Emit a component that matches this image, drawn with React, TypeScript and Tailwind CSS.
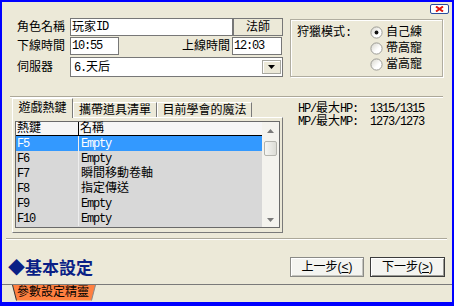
import React from "react";

const ASCII = /^[\x20-\x7e]+$/;
function Mx({ t }: { t: string }) {
  const parts = t.split(/([\x20-\x7e]+)/).filter((s) => s.length);
  return (
    <>
      {parts.map((p, i) =>
        ASCII.test(p) ? (
          <span key={i} className="[font-family:'Liberation_Mono',monospace] tracking-[-1.2px] whitespace-pre">
            {p}
          </span>
        ) : (
          <span key={i}>{p}</span>
        )
      )}
    </>
  );
}

function Radio({ checked, id }: { checked?: boolean; id: string }) {
  return (
    <svg width="13" height="13" viewBox="0 0 13 13" className="shrink-0">
      <defs>
        <linearGradient id={id} x1="0" y1="0" x2="1" y2="1">
          <stop offset="0" stopColor="#d4d2c8" />
          <stop offset="0.6" stopColor="#ffffff" />
          <stop offset="1" stopColor="#ffffff" />
        </linearGradient>
      </defs>
      <circle cx="6.5" cy="6.5" r="5.6" fill={`url(#${id})`} stroke="#9c9c96" strokeWidth="1" />
      {checked && <circle cx="6.5" cy="6.5" r="1.9" fill="#111" />}
    </svg>
  );
}

function Tri({ up }: { up?: boolean }) {
  return (
    <svg width="7" height="4" viewBox="0 0 7 4">
      <path d={up ? "M0 4 L3.5 0 L7 4Z" : "M0 0 L7 0 L3.5 4Z"} fill="#7a7a7a" />
    </svg>
  );
}

const rows: [string, string, boolean?][] = [
  ["F5", "Empty", true],
  ["F6", "Empty"],
  ["F7", "瞬間移動卷軸"],
  ["F8", "指定傳送"],
  ["F9", "Empty"],
  ["F10", "Empty"],
];

export default function App() {
  return (
    <div className="w-[454px] h-[306px] bg-[#ece9d8] border-solid border-[#0000ff] border-t-2 border-l-2 border-r-2 border-b-4 flex flex-col text-[12px] leading-[14px] text-black [font-family:'Liberation_Sans','Noto_Sans_CJK_TC',sans-serif] overflow-hidden">
      {/* header with close button */}
      <div className="h-[16px] flex justify-end items-start pr-[3px]">
        <div className="mt-[2px] w-[19px] h-[10px] rounded-[2px] border border-[#2a4c9c] bg-white flex items-center justify-center">
          <svg width="9" height="6" viewBox="0 0 9 6">
            <path d="M1 0.5 L8 5.5 M8 0.5 L1 5.5" stroke="#e0140c" strokeWidth="2" />
          </svg>
        </div>
      </div>

      {/* top section */}
      <div className="h-[60px] flex">
        <div className="ml-[15px] w-[266px] flex flex-col">
          <div className="h-[18px] flex items-center">
            <div className="w-[53px]"><Mx t="角色名稱" /></div>
            <div className="w-[163px] h-[18px] bg-white border border-[#777] flex items-center pl-[1px]">
              <Mx t="玩家ID" />
            </div>
            <div className="w-[50px] h-[18px] border border-[#777] flex items-center justify-center">
              <Mx t="法師" />
            </div>
          </div>
          <div className="mt-[1px] h-[18px] flex items-center">
            <div className="w-[53px]"><Mx t="下線時間" /></div>
            <div className="w-[49px] h-[18px] bg-white border border-[#777] flex items-center pl-[1px]">
              <Mx t="10:55" />
            </div>
            <div className="flex-1 text-right pr-[2px]"><Mx t="上線時間" /></div>
            <div className="w-[50px] h-[18px] mr-[1px] bg-white border border-[#777] flex items-center pl-[1px]">
              <Mx t="12:03" />
            </div>
          </div>
          <div className="mt-[2px] h-[20px] flex items-center">
            <div className="w-[53px]"><Mx t="伺服器" /></div>
            <div className="w-[213px] h-[20px] bg-white border border-[#777] flex items-center justify-between pl-[3px] pr-[1px]">
              <span><Mx t="6.天后" /></span>
              <div className="w-[19px] h-[14px] bg-[#ece9d8] border border-[#a8a8a0] shadow-[inset_1px_1px_0_#fff] flex items-center justify-center">
                <svg width="7" height="4" viewBox="0 0 7 4">
                  <path d="M0 0 L7 0 L3.5 4Z" fill="#000" />
                </svg>
              </div>
            </div>
          </div>
        </div>
        <div className="ml-[7px] mt-[1px] w-[153px] h-[58px] border border-[#b0ada0] shadow-[inset_1px_1px_0_#fff,1px_1px_0_#fff] flex pl-[6px] pt-[4px]">
          <div className="w-[73px] leading-[16px]"><Mx t="狩獵模式:" /></div>
          <div className="flex flex-col">
            {[
              ["自己練", true],
              ["帶高寵", false],
              ["當高寵", false],
            ].map(([l, c], i) => (
              <div key={i} className="h-[16px] flex items-center">
                <Radio id={`rg${i}`} checked={c as boolean} />
                <span className="ml-[3px] leading-[16px]"><Mx t={l as string} /></span>
              </div>
            ))}
          </div>
        </div>
      </div>

      {/* separator */}
      <div className="mt-[18px] ml-[8px] w-[433px] h-[2px] border-t border-[#aca899] border-b border-b-white" />

      {/* middle */}
      <div className="flex h-[135px]">
        <div className="ml-[10px] w-[271px] flex flex-col">
          <div className="h-[19px] flex items-end">
            <div className="relative z-10 -mb-[1px] w-[61px] h-[20px] bg-[#ece9d8] border-t border-l border-white border-r border-r-[#7a7a7a] flex items-start justify-center pt-[2px]">
              <Mx t="遊戲熱鍵" />
            </div>
            <div className="w-[84px] h-[15px] bg-[#ece9d8] border-t border-l border-white border-r border-r-[#7a7a7a] flex items-center justify-center">
              <Mx t="攜帶道具清單" />
            </div>
            <div className="w-[95px] h-[15px] bg-[#ece9d8] border-t border-l border-white border-r border-r-[#7a7a7a] flex items-center justify-center">
              <Mx t="目前學會的魔法" />
            </div>
          </div>
          <div className="h-[116px] border-t border-l border-white border-r border-b border-r-[#7a7a7a] border-b-[#7a7a7a] pl-[2px] pt-[3px]">
            <div className="w-[265px] h-[107px] border border-[#6a6a6a] flex bg-[#d8d8d8]">
              <div className="flex-1 flex flex-col">
                <div className="h-[14px] flex border-b border-black bg-[#f6f6f6] leading-[13px]">
                  <div className="w-[63px] border-r border-black pl-[1px]"><Mx t="熱鍵" /></div>
                  <div className="flex-1 pl-[1px]"><Mx t="名稱" /></div>
                </div>
                {rows.map(([k, n, sel], i) => (
                  <div key={i} className={`h-[15px] flex leading-[15px] ${sel ? "bg-[#3399ff] text-white" : ""}`}>
                    <div className="w-[63px] border-r border-[#eeeeee] pl-[1px]"><Mx t={k} /></div>
                    <div className="flex-1 pl-[2px]"><Mx t={n} /></div>
                  </div>
                ))}
              </div>
              <div className="w-[17px] bg-[#f4f3ee] flex flex-col items-center">
                <div className="h-[17px] flex items-center justify-center"><Tri up /></div>
                <div className="mt-[2px] w-[13px] h-[15px] rounded-[2px] border border-[#b4b4ae] bg-[linear-gradient(90deg,#f6f6f3,#dcdcd6)]" />
                <div className="flex-1" />
                <div className="h-[15px] flex items-center justify-center"><Tri /></div>
              </div>
            </div>
          </div>
        </div>
        <div className="ml-[15px] pt-[4px] leading-[12px]">
          <div><Mx t="HP/最大HP:  1315/1315" /></div>
          <div><Mx t="MP/最大MP:  1273/1273" /></div>
        </div>
      </div>

      {/* bottom separator */}
      <div className="mt-[5px] ml-[4px] w-[441px] h-[2px] border-t border-[#aca899] border-b border-b-white" />

      {/* title & buttons */}
      <div className="mt-[17px] h-[20px] flex items-center">
        <div className="ml-[6px] text-[17px] leading-[20px] font-bold text-[#0a1f86] [font-family:'Noto_Sans_CJK_TC',sans-serif]">
          ◆基本設定
        </div>
        <div className="ml-auto mr-[7px] flex gap-[6px]">
          <div className="w-[74px] h-[20px] bg-[#f4f4f0] border border-[#8a8a86] shadow-[inset_1px_1px_0_#fff,inset_-1px_-1px_0_#c4c4be] flex items-center justify-center">
            <span>上一步(<u>&lt;</u>)</span>
          </div>
          <div className="w-[75px] h-[20px] bg-[#f4f4f0] border border-[#3c3c3c] shadow-[inset_1px_1px_0_#fff,inset_-1px_-1px_0_#9a9a94] flex items-center justify-center">
            <span>下一步(<u>&gt;</u>)</span>
          </div>
        </div>
      </div>

      {/* status bar */}
      <div className="mt-auto h-[18px] border-t border-[#7a7a7a] flex">
        <div className="relative ml-[10px] w-[84px] h-[16px]">
          <svg className="absolute inset-0" width="84" height="16" viewBox="0 0 84 16">
            <polygon points="0.5,0 83.5,0 79.5,15.5 4.5,15.5" fill="#ff8040" />
            <path d="M0.5 0 L4.5 15.5" stroke="#333" strokeWidth="1" />
            <path d="M83.5 0 L79.5 15.5" stroke="#8a8a8a" strokeWidth="1" />
          </svg>
          <div className="relative pl-[5px] leading-[15px]">
            <Mx t="參數設定精靈" />
          </div>
        </div>
      </div>
    </div>
  );
}
